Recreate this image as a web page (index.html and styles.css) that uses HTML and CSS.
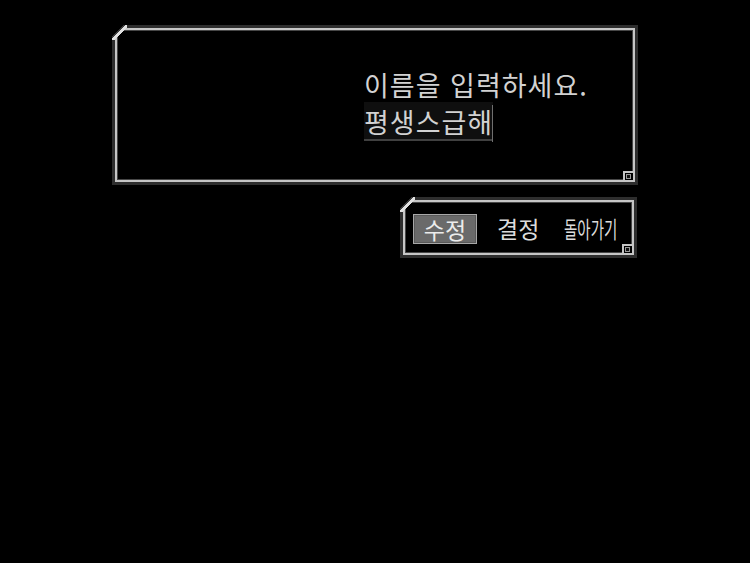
FILE: index.html
```html
<!DOCTYPE html>
<html lang="ko">
<head>
<meta charset="utf-8">
<title>이름 입력</title>
<link rel="stylesheet" href="styles.css">
</head>
<body>
<div class="screen">
  <div class="frame msg">
    <span class="chamfer"></span>
    <p class="line">이름을 입력하세요.</p>
    <p class="line"><span class="input">평생스급해</span><span class="caret"></span></p>
    <span class="corner"></span>
  </div>
  <div class="frame menu">
    <span class="chamfer"></span>
    <span class="opt sel">수정</span>
    <span class="opt ok">결정</span>
    <span class="opt cond"><span class="squeeze">돌아가기</span></span>
    <span class="corner"></span>
  </div>
</div>
</body>
</html>
```

FILE: styles.css
```css
html, body {
  margin: 0;
  padding: 0;
  background: #000;
  width: 750px;
  height: 563px;
  overflow: hidden;
}

.screen {
  display: flex;
  flex-direction: column;
  align-items: flex-start;
  padding: 28px 0 0 115px;
  font-family: "Noto Sans CJK KR", "Noto Sans", sans-serif;
  color: #d2d2d2;
}

.frame {
  position: relative;
  box-sizing: border-box;
  border: 2px solid #c6c6c6;
  box-shadow: 0 0 0 3px #2e2e2e, inset 0 0 0 1px #474747;
  background: #000;
}

.chamfer {
  position: absolute;
  top: -5px;
  left: -5px;
  width: 15px;
  height: 15px;
  background: linear-gradient(135deg, #000 0 38%, #3a3a3a 38% 44%, #e0e0e0 44% 58%, transparent 58%);
}

.corner {
  position: absolute;
  right: 0;
  bottom: 0;
  width: 8px;
  height: 7px;
  border-top: 2px solid #c6c6c6;
  border-left: 2px solid #c6c6c6;
  background: #000;
}

.corner::after {
  content: "";
  position: absolute;
  left: 1px;
  top: 1px;
  width: 3px;
  height: 3px;
  border: 1px solid #9a9a9a;
  background: #111;
}

.msg {
  width: 520px;
  height: 154px;
  padding: 36px 0 0 247px;
}

.line {
  margin: 0;
  font-size: 27px;
  letter-spacing: 1px;
  line-height: 37px;
  white-space: nowrap;
}

.input {
  background: #0f0f0f;
  box-shadow: inset 0 -2px #404040;
}

.caret {
  display: inline-block;
  width: 1px;
  height: 37px;
  margin-left: -1px;
  background: #6f6f6f;
  vertical-align: -9px;
}

.menu {
  margin-top: 18px;
  margin-left: 288px;
  width: 231px;
  height: 55px;
  display: flex;
  align-items: center;
  padding-left: 8px;
}

.opt {
  font-size: 23px;
  line-height: 28px;
  white-space: nowrap;
  color: #dcdcdc;
}

.sel {
  box-sizing: border-box;
  width: 64px;
  height: 30px;
  margin-top: 2px;
  text-align: center;
  background: #6a6a6a;
  border: 1px solid #a8a8a8;
  box-shadow: inset 0 0 0 1px #585858;
  color: #ececec;
}

.ok {
  margin-left: 20px;
}

.cond {
  margin-left: 25px;
  width: 53px;
}

.squeeze {
  display: inline-block;
  transform: scaleX(0.63);
  transform-origin: left center;
}
```
